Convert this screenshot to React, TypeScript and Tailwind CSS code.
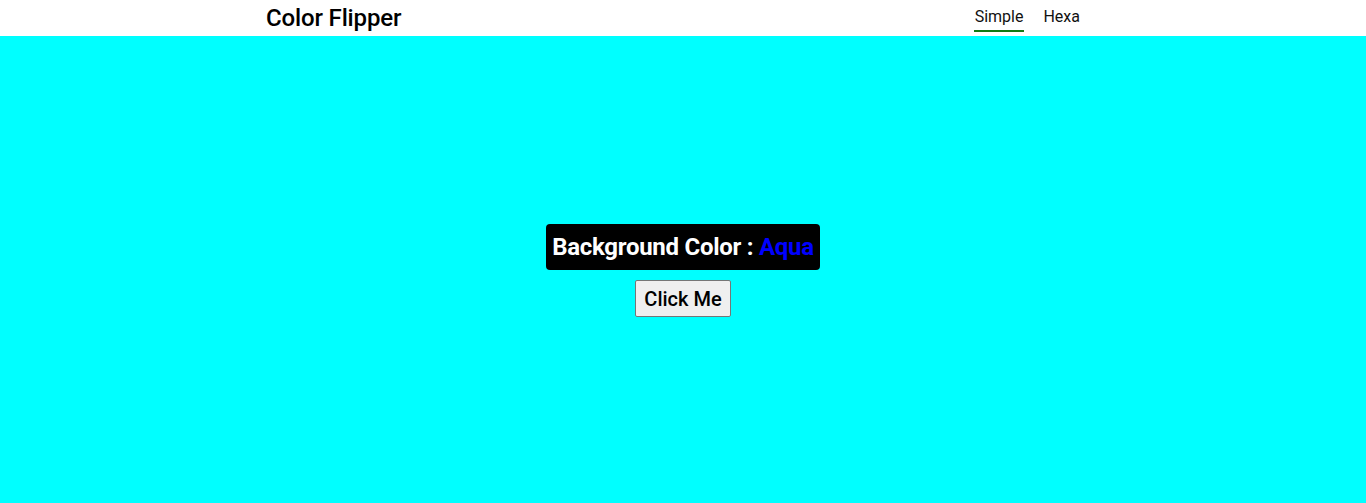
export default function App() {
  return (
    <div className="flex h-[503px] flex-col" style={{ fontFamily: "Roboto, sans-serif" }}>
      <nav className="h-[36px] bg-white shrink-0">
        <div className="mx-[266px] flex h-full items-center justify-between">
          <h1 className="text-[24px] font-medium leading-none tracking-[-0.15px] text-black">Color Flipper</h1>
          <ul className="mr-[20px] flex h-full items-center gap-[20px] text-[16px] text-[#111]">
            <li className="relative pb-[3px] pl-[1px]">
              Simple
              <span className="absolute left-0 -right-[1px] bottom-0 h-[2px] bg-[#137a13]"></span>
            </li>
            <li className="pb-[3px]">Hexa</li>
          </ul>
        </div>
      </nav>
      <main className="flex flex-1 flex-col items-center justify-center bg-[#00ffff] pt-[2px]">
        <h2 className="rounded-[4px] bg-black px-[6px] py-[6px] text-[24px] font-bold leading-[34px] tracking-[-0.27px] text-white">
          Background Color : <span className="text-[#0000ff]">Aqua</span>
        </h2>
        <button className="mt-[10px] h-[37px] rounded-[2px] border border-[#767676] bg-[#efefef] px-[8px] text-[20px] font-medium leading-none text-black">
          Click Me
        </button>
      </main>
    </div>
  );
}
